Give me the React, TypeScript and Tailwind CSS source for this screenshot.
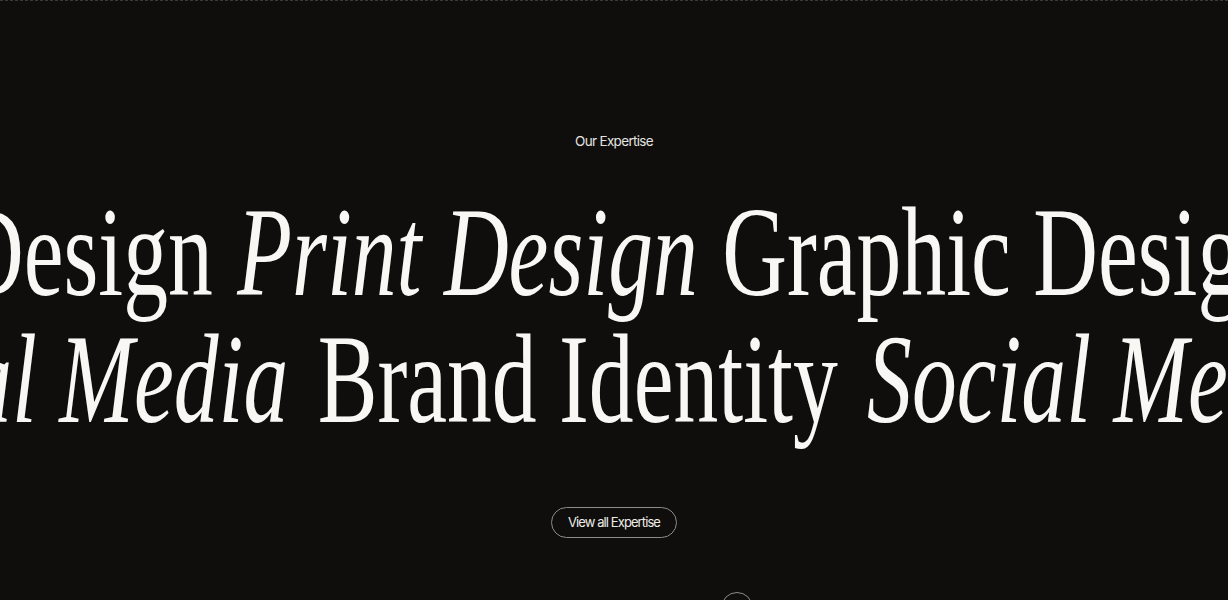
import React from "react";

type Word = { text: string; italic: boolean };

const rowOne: Word[] = [
  { text: "Graphic Design", italic: false },
  { text: "Print Design", italic: true },
  { text: "Graphic Design", italic: false },
  { text: "Print Design", italic: true },
];

const rowTwo: Word[] = [
  { text: "Social Media", italic: true },
  { text: "Brand Identity", italic: false },
  { text: "Social Media", italic: true },
  { text: "Brand Identity", italic: false },
];

function MarqueeRow({ words, className }: { words: Word[]; className: string }) {
  return (
    <div className={`flex w-max origin-left scale-x-70 whitespace-nowrap ${className}`}>
      {words.map((w, i) => (
        <span key={i} className={w.italic ? "italic" : ""}>
          {w.text}
        </span>
      ))}
    </div>
  );
}

export default function App() {
  return (
    <div className="relative min-h-screen overflow-hidden border-t border-dashed border-[#3b3a38] bg-[#0f0e0c] text-[#f8f7f4]">
      <section className="flex flex-col pt-[130px] pb-24">
        <p className="text-center font-['Inter',sans-serif] text-[13.5px] leading-5 tracking-[-0.05em] text-[#e4e3e0]">
          Our Expertise
        </p>

        <div className="mt-[38px] font-['Liberation_Serif',serif] text-[128px] font-normal leading-[127px]">
          <MarqueeRow words={rowOne} className="ml-[-352px] gap-[35px]" />
          <MarqueeRow words={rowTwo} className="ml-[-187px] gap-[42px]" />
        </div>

        <div className="mt-[64px] flex justify-center">
          <button className="rounded-full border border-[#8d8b88] px-[16px] py-[4px] font-['Inter',sans-serif] text-[13px] leading-[21px] tracking-[-0.07em] text-[#eeece9]">
            View all Expertise
          </button>
        </div>
      </section>

      <div className="absolute left-[721px] top-[591px] h-8 w-8 rounded-full border border-[#8d8b88]" />
    </div>
  );
}
